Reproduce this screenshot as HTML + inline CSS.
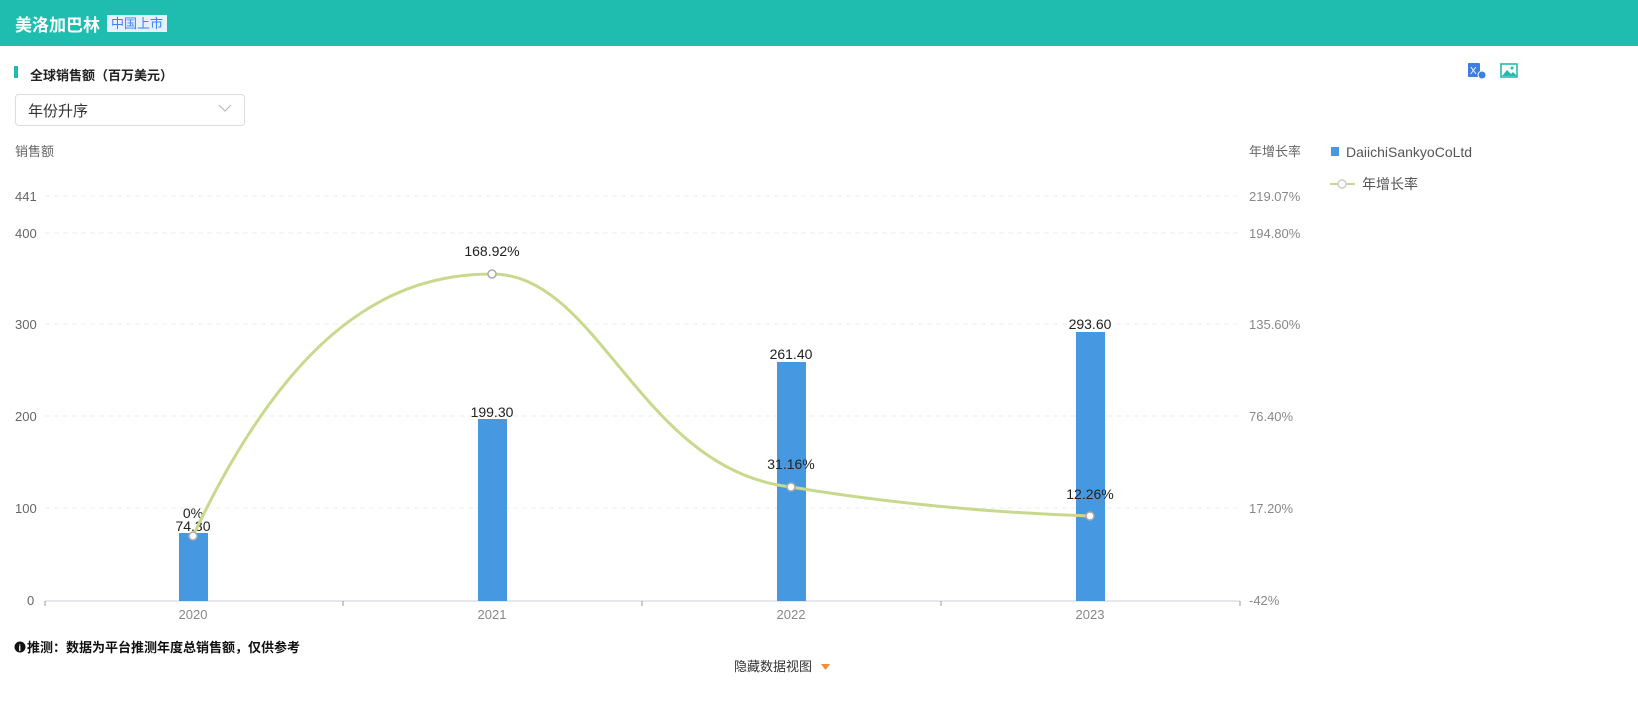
<!DOCTYPE html>
<html><head><meta charset="utf-8"><style>
body{margin:0;width:1638px;height:714px;background:#fff;font-family:"Liberation Sans","Noto Sans CJK SC",sans-serif;overflow:hidden;position:relative}
.hdr{position:absolute;left:0;top:0;width:1638px;height:46px;background:#1fbcb0}
.t{position:absolute}
</style></head><body>
<div class="hdr"></div>
<div class="t" style="left:15px;top:11px;color:#fff;font-size:17px;font-weight:bold">美洛加巴林</div>
<div class="t" style="left:107px;top:15px;background:#e6f0ff;color:#3b82f6;font-size:13px;padding:0 4px;line-height:17px">中国上市</div>
<div class="t" style="left:14px;top:66px;width:4px;height:12px;background:#1fbcb0"></div>
<div class="t" style="left:30px;top:65px;font-size:13px;font-weight:bold;color:#222">全球销售额（百万美元）</div>
<div class="t" style="left:15px;top:94px;width:228px;height:30px;border:1px solid #ddd;border-radius:4px"></div>
<div class="t" style="left:28px;top:100px;font-size:15px;color:#333">年份升序</div>
<svg class="t" style="left:218px;top:103px" width="14" height="10"><path d="M1 2l6 6 6-6" fill="none" stroke="#bbb" stroke-width="1.2"/></svg>
<svg class="t" style="left:1467px;top:62px" width="20" height="18"><rect x="1" y="1" width="12" height="14" rx="1" fill="#3b7fe0"/><text x="3" y="12" font-size="10" fill="#fff" font-family="Liberation Sans">X</text><circle cx="15" cy="13" r="4" fill="#3b7fe0" stroke="#fff"/></svg>
<svg class="t" style="left:1500px;top:63px" width="18" height="15"><rect x="1" y="1" width="16" height="13" fill="none" stroke="#1fbcb0" stroke-width="1.6"/><path d="M2 13l5-6 4 4 2-2 4 4z" fill="#1fbcb0"/><circle cx="12" cy="5" r="1.5" fill="#1fbcb0"/></svg>
<svg class="t" style="left:0;top:0" width="1638" height="714" font-family="Liberation Sans,Noto Sans CJK SC,sans-serif">
<g stroke="#eee" stroke-dasharray="5,4"><line x1="45" x2="1240" y1="196" y2="196"/><line x1="45" x2="1240" y1="233" y2="233"/><line x1="45" x2="1240" y1="324" y2="324"/><line x1="45" x2="1240" y1="416" y2="416"/><line x1="45" x2="1240" y1="508" y2="508"/></g>
<line x1="45" x2="1240" y1="601" y2="601" stroke="#ccd"/>
<g stroke="#999"><line x1="45" x2="45" y1="601" y2="606"/><line x1="343" x2="343" y1="601" y2="606"/><line x1="642" x2="642" y1="601" y2="606"/><line x1="941" x2="941" y1="601" y2="606"/><line x1="1240" x2="1240" y1="601" y2="606"/></g>
<g font-size="13" fill="#666"><text x="15" y="156">销售额</text><text x="1249" y="156">年增长率</text>
<text x="15" y="201">441</text><text x="15" y="238">400</text><text x="15" y="329">300</text><text x="15" y="421">200</text><text x="15" y="513">100</text><text x="27" y="605">0</text>
<text x="1249" y="201" fill="#888">219.07%</text><text x="1249" y="238" fill="#888">194.80%</text><text x="1249" y="329" fill="#888">135.60%</text><text x="1249" y="421" fill="#888">76.40%</text><text x="1249" y="513" fill="#888">17.20%</text><text x="1249" y="605" fill="#888">-42%</text>
<text x="193" y="619" text-anchor="middle" fill="#888">2020</text><text x="492" y="619" text-anchor="middle" fill="#888">2021</text><text x="791" y="619" text-anchor="middle" fill="#888">2022</text><text x="1090" y="619" text-anchor="middle" fill="#888">2023</text></g>
<g fill="#4699e0"><rect x="179" y="533" width="29" height="68"/><rect x="478" y="419" width="29" height="182"/><rect x="777" y="362" width="29" height="239"/><rect x="1076" y="332" width="29" height="269"/></g>
<g font-size="14" fill="#222" text-anchor="middle"><text x="193" y="531">74.30</text><text x="492" y="417">199.30</text><text x="791" y="359">261.40</text><text x="1090" y="329">293.60</text>
<text x="193" y="518">0%</text><text x="492" y="256">168.92%</text><text x="791" y="469">31.16%</text><text x="1090" y="499">12.26%</text></g>
<path d="M193 536C290 330 390 274 492 274C600 274 640 470 791 487C900 505 1000 513 1090 516" fill="none" stroke="#c8d98e" stroke-width="3"/>
<g fill="#fff" stroke="#aaa" stroke-width="1.5"><circle cx="193" cy="536" r="4"/><circle cx="492" cy="274" r="4"/><circle cx="791" cy="487" r="4"/><circle cx="1090" cy="516" r="4"/></g>
<rect x="1331" y="147" width="8" height="9" fill="#4699e0"/><text x="1346" y="157" font-size="14" fill="#555">DaiichiSankyoCoLtd</text>
<line x1="1330" x2="1355" y1="184" y2="184" stroke="#c8d98e" stroke-width="2"/><circle cx="1342" cy="184" r="4" fill="#fff" stroke="#ccc" stroke-width="1.5"/><text x="1362" y="189" font-size="14" fill="#555">年增长率</text>
<circle cx="20" cy="647" r="5.5" fill="#111"/><text x="18.5" y="651" font-size="9" fill="#fff" font-weight="bold">i</text>
<text x="27" y="652" font-size="13" fill="#111" font-weight="bold">推测：数据为平台推测年度总销售额，仅供参考</text>
<text x="734" y="671" font-size="13" fill="#333">隐藏数据视图</text><path d="M821 664h9l-4.5 6z" fill="#f08c3c"/>
</svg>
</body></html>
